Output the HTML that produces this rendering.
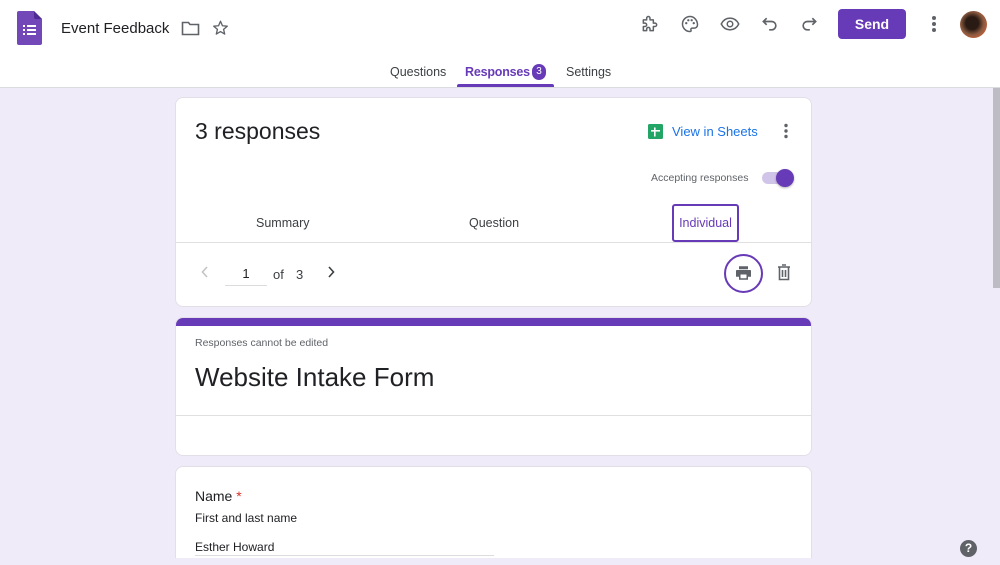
<!DOCTYPE html>
<html><head><meta charset="utf-8"><style>
*{box-sizing:border-box;margin:0;padding:0}
html,body{width:1000px;height:565px;overflow:hidden}
body{background:#f0ebf8;font-family:"Liberation Sans",Arial,sans-serif;position:relative;color:#202124}
.hdr{position:absolute;left:0;top:0;width:1000px;height:88px;background:#fff;border-bottom:1px solid #dadce0}
.abs{position:absolute}
.card{position:absolute;left:175px;width:637px;background:#fff;border-radius:8px;border:1px solid #e3dfe8}
svg{display:block}
</style></head><body>
<div class="hdr">
  <svg class="abs" style="left:17px;top:11px" width="25" height="34" viewBox="0 0 25 34"><path d="M2 0h15l8 8v24a2 2 0 0 1-2 2H2a2 2 0 0 1-2-2V2a2 2 0 0 1 2-2z" fill="#7248b9"/><path d="M17 0l8 8h-6a2 2 0 0 1-2-2z" fill="#4e2a92"/><g fill="#fff"><rect x="6" y="14" width="2" height="2"/><rect x="6" y="18" width="2" height="2"/><rect x="6" y="22" width="2" height="2"/><rect x="10" y="14" width="9" height="2"/><rect x="10" y="18" width="9" height="2"/><rect x="10" y="22" width="9" height="2"/></g></svg>
  <div class="abs" style="left:61px;top:20px;font-size:15px;color:#202124">Event Feedback</div>
  <svg class="abs" style="left:181px;top:20px" width="19" height="16" viewBox="0 0 19 16"><path d="M1.5 2.5h6l1.5 2h8.5v10h-16z" fill="none" stroke="#5f6368" stroke-width="1.6"/></svg>
  <svg class="abs" style="left:211px;top:19px" width="19" height="18" viewBox="0 0 24 24"><path d="M12 3l2.6 6 6.4.6-4.9 4.2 1.5 6.3L12 16.8 6.4 20.1l1.5-6.3L3 9.6l6.4-.6z" fill="none" stroke="#5f6368" stroke-width="1.8" stroke-linejoin="round"/></svg>
  <svg class="abs" style="left:640px;top:14px" width="20" height="20" viewBox="0 0 24 24"><path d="M4 7h4V5a2 2 0 0 1 4 0v2h4v4h2a2 2 0 0 1 0 4h-2v5h-4v-2a2 2 0 0 0-4 0v2H4v-5h2a2 2 0 0 0 0-4H4z" fill="none" stroke="#5f6368" stroke-width="1.8" stroke-linejoin="round"/></svg>
  <svg class="abs" style="left:680px;top:14px" width="20" height="20" viewBox="0 0 24 24"><path d="M12 3a9 9 0 0 0 0 18c1.2 0 1.6-.8 1.2-1.7-.5-1 0-2.3 1.3-2.3H17a4 4 0 0 0 4-4c0-5.5-4-10-9-10z" fill="none" stroke="#5f6368" stroke-width="1.8"/><circle cx="7.5" cy="11" r="1.4" fill="#5f6368"/><circle cx="10" cy="7.5" r="1.4" fill="#5f6368"/><circle cx="14" cy="7.5" r="1.4" fill="#5f6368"/><circle cx="16.5" cy="11" r="1.4" fill="#5f6368"/></svg>
  <svg class="abs" style="left:719px;top:14px" width="22" height="20" viewBox="0 0 24 24"><path d="M1.5 12C4 7 8 5 12 5s8 2 10.5 7C20 17 16 19 12 19s-8-2-10.5-7z" fill="none" stroke="#5f6368" stroke-width="1.8"/><circle cx="12" cy="12" r="3.3" fill="none" stroke="#5f6368" stroke-width="1.8"/></svg>
  <svg class="abs" style="left:760px;top:14px" width="20" height="20" viewBox="0 0 24 24"><path d="M8 5L4 9l4 4M4 9h10a5 5 0 0 1 0 10h-3" fill="none" stroke="#5f6368" stroke-width="2"/></svg>
  <svg class="abs" style="left:799px;top:14px" width="20" height="20" viewBox="0 0 24 24"><path d="M16 5l4 4-4 4M20 9H10a5 5 0 0 0 0 10h3" fill="none" stroke="#5f6368" stroke-width="2"/></svg>
  <div class="abs" style="left:838px;top:9px;width:68px;height:30px;background:#673ab7;border-radius:4px;color:#fff;font-size:14px;font-weight:bold;text-align:center;line-height:30px">Send</div>
  <svg class="abs" style="left:930px;top:15px" width="8" height="18"><circle cx="4" cy="3" r="2" fill="#5f6368"/><circle cx="4" cy="9" r="2" fill="#5f6368"/><circle cx="4" cy="15" r="2" fill="#5f6368"/></svg>
  <div class="abs" style="left:960px;top:11px;width:27px;height:27px;border-radius:50%;background:radial-gradient(circle at 45% 45%,#2a1a14 30%,#8a5a40 55%,#c0603a 75%,#6a8aa0)"></div>
  <div class="abs" style="left:390px;top:65px;font-size:12.5px;color:#3c4043">Questions</div>
  <div class="abs" style="left:465px;top:65px;font-size:12.5px;color:#673ab7;font-weight:bold;letter-spacing:-0.2px">Responses</div>
  <div class="abs" style="left:532px;top:64px;width:14px;height:16px;border-radius:7px;background:#673ab7;color:#fff;font-size:10px;text-align:center;line-height:16px">3</div>
  <div class="abs" style="left:457px;top:84px;width:97px;height:3px;background:#673ab7;border-radius:2px 2px 0 0"></div>
  <div class="abs" style="left:566px;top:65px;font-size:12.5px;color:#3c4043">Settings</div>
</div>
<div class="abs" style="left:993px;top:88px;width:7px;height:200px;background:#bdbcc4"></div>

<div class="card" style="top:97px;height:210px">
  <div class="abs" style="left:19px;top:20px;font-size:23px">3 responses</div>
  <svg class="abs" style="left:472px;top:26px" width="15" height="15" viewBox="0 0 15 15"><rect width="15" height="15" rx="1.5" fill="#23a566"/><rect x="3" y="6" width="9" height="1.6" fill="#fff"/><rect x="6" y="3.5" width="1.6" height="9" fill="#fff"/></svg>
  <div class="abs" style="left:496px;top:26px;font-size:13px;color:#1a73e8">View in Sheets</div>
  <svg class="abs" style="left:607px;top:25px" width="6" height="16"><circle cx="3" cy="2.5" r="1.7" fill="#5f6368"/><circle cx="3" cy="8" r="1.7" fill="#5f6368"/><circle cx="3" cy="13.5" r="1.7" fill="#5f6368"/></svg>
  <div class="abs" style="left:475px;top:74px;font-size:10.5px;color:#5f6368">Accepting responses</div>
  <div class="abs" style="left:586px;top:74px;width:28px;height:12px;border-radius:6px;background:#d1c4e9"></div>
  <div class="abs" style="left:600px;top:71px;width:18px;height:18px;border-radius:50%;background:#673ab7;box-shadow:0 1px 2px rgba(0,0,0,.3)"></div>
  <div class="abs" style="left:80px;top:118px;font-size:12.5px;color:#3c4043">Summary</div>
  <div class="abs" style="left:293px;top:118px;font-size:12.5px;color:#3c4043">Question</div>
  <div class="abs" style="left:496px;top:106px;width:67px;height:38px;border:2px solid #673ab7;border-radius:3px;font-size:12.5px;color:#673ab7;text-align:center;line-height:34px">Individual</div>
  <div class="abs" style="left:0;top:144px;width:635px;height:1px;background:#e0e0e0"></div>
  <svg class="abs" style="left:25px;top:168px" width="8" height="12"><path d="M6 1L1.5 6 6 11" fill="none" stroke="#c4c4c4" stroke-width="1.6"/></svg>
  <div class="abs" style="left:49px;top:168px;width:42px;height:20px;border-bottom:1px solid #dadce0;text-align:center;font-size:13px">1</div>
  <div class="abs" style="left:97px;top:169px;font-size:13px;color:#3c4043">of</div>
  <div class="abs" style="left:120px;top:169px;font-size:13px;color:#3c4043">3</div>
  <svg class="abs" style="left:151px;top:168px" width="8" height="12"><path d="M2 1l4.5 5L2 11" fill="none" stroke="#3c4043" stroke-width="1.6"/></svg>
  <div class="abs" style="left:548px;top:156px;width:39px;height:39px;border-radius:50%;border:2px solid #673ab7"></div>
  <svg class="abs" style="left:558px;top:166px" width="19" height="18" viewBox="0 0 24 24"><path d="M6 3h12v4H6z M3 8h18a1 1 0 0 1 1 1v8h-4v4H6v-4H2V9a1 1 0 0 1 1-1z" fill="#5f6368"/><rect x="8" y="14" width="8" height="5" fill="#fff"/></svg>
  <svg class="abs" style="left:601px;top:166px" width="14" height="17" viewBox="0 0 14 17"><path d="M1 3h12M5 1h4M2.5 3.5v12h9v-12M5.5 6v7M8.5 6v7" fill="none" stroke="#5f6368" stroke-width="1.6"/></svg>
</div>

<div class="card" style="top:317px;height:139px;overflow:hidden">
  <div class="abs" style="left:-1px;top:-1px;width:637px;height:9px;background:#673ab7"></div>
  <div class="abs" style="left:19px;top:19px;font-size:10.5px;color:#5f6368">Responses cannot be edited</div>
  <div class="abs" style="left:19px;top:44px;font-size:26px;color:#202124">Website Intake Form</div>
  <div class="abs" style="left:0;top:97px;width:635px;height:1px;background:#e0e0e0"></div>
</div>

<div class="card" style="top:466px;height:120px">
  <div class="abs" style="left:19px;top:21px;font-size:14px">Name <span style="color:#d93025">*</span></div>
  <div class="abs" style="left:19px;top:44px;font-size:12px">First and last name</div>
  <div class="abs" style="left:19px;top:73px;font-size:12px">Esther Howard</div>
  <div class="abs" style="left:19px;top:88px;width:299px;height:1px;background:#dadce0"></div>
</div>
<div class="abs" style="left:0;top:558px;width:1000px;height:7px;background:#f0ebf8"></div>

<div class="abs" style="left:960px;top:540px;width:17px;height:17px;border-radius:50%;background:#5f6368;color:#fff;font-size:12px;font-weight:bold;text-align:center;line-height:17px">?</div>
</body></html>
